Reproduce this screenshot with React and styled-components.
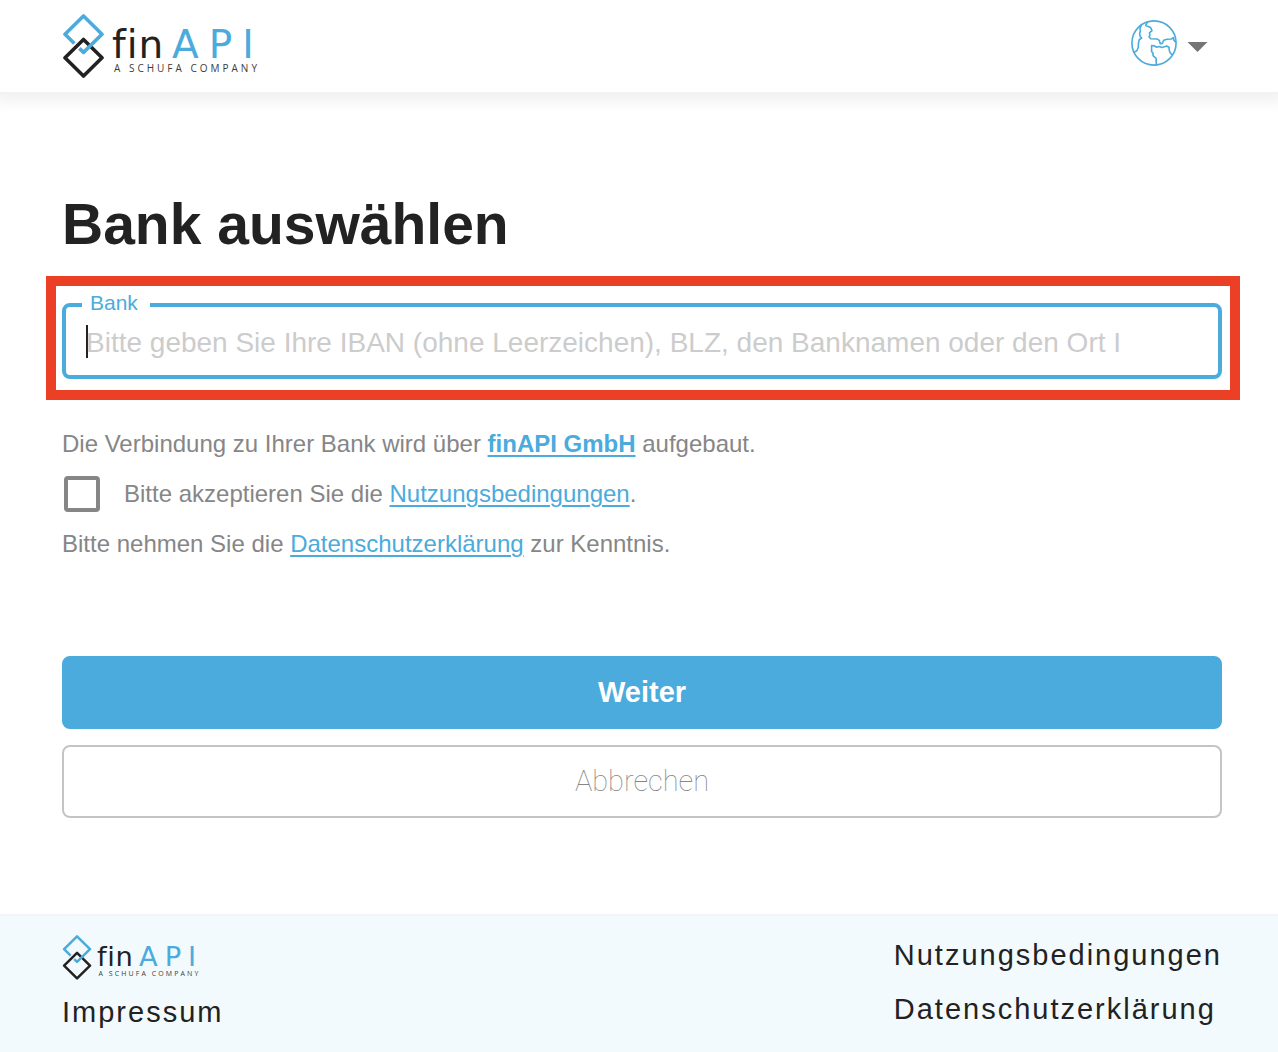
import React from "react";
import styled, { createGlobalStyle } from "styled-components";

const blue = "#4aabdc";
const ink = "#222222";
const grey = "#868686";

const GlobalStyle = createGlobalStyle`
  *, *::before, *::after { box-sizing: border-box; }
  body {
    margin: 0;
    background: #ffffff;
    color: ${ink};
    font-family: "Liberation Sans", Arial, sans-serif;
  }
  #root { min-height: 100vh; display: flex; flex-direction: column; overflow-x: hidden; }
`;

const Header = styled.header`
  display: flex;
  align-items: center;
  justify-content: space-between;
  padding: 14px 70px 14px 62px;
  border-bottom: 2px solid #f1f1f6;
  box-shadow: 0 2px 14px 6px rgba(0, 0, 0, 0.06);
`;

const LogoSvg = styled.svg`
  display: block;
  width: ${(p) => (p.$small ? "140px" : "200px")};
  height: auto;
`;

const Wordmark = styled.text`
  font-family: "DejaVu Sans", sans-serif;
  font-weight: 400;
  font-size: 39px;
  fill: ${(p) => p.$fill};
  letter-spacing: ${(p) => p.$track};
`;

const Tagline = styled.text`
  font-family: "Open Sans", sans-serif;
  font-size: 10px;
  letter-spacing: 3px;
  fill: #3c3c3c;
`;

const LanguageButton = styled.button`
  display: flex;
  align-items: center;
  gap: 10px;
  padding: 0 0 6px;
  border: 0;
  background: none;
  cursor: pointer;
`;

const Caret = styled.svg`
  display: block;
  margin-top: 8px;
`;

const Main = styled.main`
  flex: 1;
  padding: 90px 56px 96px 62px;
`;

const Title = styled.h1`
  margin: 0 0 12px;
  font-size: 57px;
  line-height: 80px;
  font-weight: 700;
`;

const Highlight = styled.div`
  margin: 0 -18px 0 -16px;
  padding: 7px 8px 11px 6px;
  border: 10px solid #ec4026;
`;

const Field = styled.fieldset`
  min-width: 0;
  margin: 0;
  padding: 0 16px 8px;
  border: 4px solid ${blue};
  border-radius: 8px;
`;

const Legend = styled.legend`
  padding: 0 12px 4px 8px;
  color: ${blue};
  font-size: 21px;
  line-height: 20px;
`;

const BankInput = styled.input`
  display: block;
  width: 100%;
  height: 50px;
  padding: 2px 4px 0;
  border: 0;
  outline: 0;
  background: none;
  color: ${ink};
  caret-color: ${ink};
  font: 28px/34px "Liberation Sans", Arial, sans-serif;
  &::placeholder { color: #cccccc; opacity: 1; }
  &:placeholder-shown:focus {
    caret-color: transparent;
    background: linear-gradient(${ink}, ${ink}) 4px 8px / 2px 33px no-repeat;
  }
`;

const Notes = styled.div`
  display: grid;
  gap: 16px;
  margin: 28px 0 96px;
  color: ${grey};
  font-size: 24px;
  line-height: 32px;
`;

const Note = styled.p`
  margin: 0;
`;

const TextLink = styled.a`
  color: ${blue};
  font-weight: ${(p) => (p.$strong ? 700 : 400)};
  text-decoration-thickness: 2px;
  text-underline-offset: 3px;
`;

const Consent = styled.div`
  display: flex;
  align-items: center;
  gap: 24px;
  padding-left: 2px;
`;

const Checkbox = styled.input`
  appearance: none;
  width: 36px;
  height: 36px;
  margin: 0;
  border: 4px solid ${grey};
  border-radius: 4px;
  &:checked { background: ${blue}; }
`;

const Actions = styled.div`
  display: grid;
  gap: 16px;
`;

const Action = styled.button`
  padding: 14px;
  border: 2px solid ${(p) => (p.$primary ? blue : "#c4c4c4")};
  border-radius: 8px;
  background: ${(p) => (p.$primary ? blue : "#ffffff")};
  color: ${(p) => (p.$primary ? "#ffffff" : grey)};
  font-family: ${(p) => (p.$primary ? '"Liberation Sans", Arial' : "Roboto")}, sans-serif;
  font-size: 29px;
  line-height: 41px;
  font-weight: ${(p) => (p.$primary ? 700 : 100)};
`;

const Footer = styled.footer`
  display: flex;
  justify-content: space-between;
  padding: 19px 56px 24px 62px;
  border-top: 2px solid #f1f4f9;
  background: #f2fafd;
`;

const FooterColumn = styled.div`
  display: grid;
  align-content: start;
  gap: ${(p) => p.$gap};
  padding-top: ${(p) => p.$top || 0};
`;

const FooterLink = styled.a`
  color: ${ink};
  font-size: 29px;
  line-height: 32px;
  letter-spacing: 2px;
  text-decoration: none;
`;

function Logo({ small }) {
  return (
    <LogoSvg $small={small} viewBox="0 0 200 64" role="img" aria-label="finAPI – a Schufa company">
      <g fill="none" strokeWidth="3.6" strokeLinejoin="round">
        <path d="M21.5 25.5 40 43.8 21.5 62 3 43.8Z" stroke={ink} />
        <path d="M12.4 29.6 3 20.2 21.5 2 40 20.2 21.5 38.4 17.4 34.4" stroke={blue} />
      </g>
      <Wordmark x="50" y="44" $fill={ink} $track="1px">fin</Wordmark>
      <Wordmark x="110" y="44" $fill={blue} $track="10px">API</Wordmark>
      <Tagline x="52" y="58">A SCHUFA COMPANY</Tagline>
    </LogoSvg>
  );
}

function Globe() {
  return (
    <svg width="46" height="46" viewBox="0 0 46 46" fill="none" stroke={blue} strokeWidth="1.6" strokeLinejoin="round" strokeLinecap="round" aria-hidden="true">
      <circle cx="23" cy="23" r="22.1" />
      <path d="M10.4 5 9 8.4 9.4 11 8.6 13.4 9.2 16.6 10.7 18 8.2 19.6 7.5 23 7.3 27.3 5.9 30.8 2.8 32.2" />
      <path d="M16.4 2.2 14.7 5.4 19.6 7.6 21 10.6 18.4 12.8 19 14.8 18 16.8 19.7 18.7 26.4 19 28.4 20.6 29.3 23.8 31.3 23.4 32.7 20.2 36 19.2 40.4 19 42.4 17.6 43 20.4 44.8 22.2" />
      <path d="M25.3 45 25.1 38.4 22 35.6 22.2 33.6 20.6 31.6 20.6 25.6 23 25.8 25.7 27.2 28 26.6 31 27.4 35.7 26 38 27.3 38.2 30 39 32.4 41.2 35" />
    </svg>
  );
}

export default function App() {
  return (
    <>
      <GlobalStyle />
      <Header>
        <Logo />
        <LanguageButton type="button" aria-label="Sprache wählen">
          <Globe />
          <Caret width="21" height="10" viewBox="0 0 21 10" aria-hidden="true">
            <path d="M.5 0h20l-10 10Z" fill="#757575" />
          </Caret>
        </LanguageButton>
      </Header>
      <Main>
        <Title>Bank auswählen</Title>
        <Highlight>
          <Field>
            <Legend><label htmlFor="bank">Bank</label></Legend>
            <BankInput
              id="bank"
              type="text"
              autoFocus
              autoComplete="off"
              placeholder="Bitte geben Sie Ihre IBAN (ohne Leerzeichen), BLZ, den Banknamen oder den Ort I"
            />
          </Field>
        </Highlight>
        <Notes>
          <Note>
            Die Verbindung zu Ihrer Bank wird über <TextLink href="#finapi" $strong>finAPI GmbH</TextLink> aufgebaut.
          </Note>
          <Consent>
            <Checkbox id="terms" type="checkbox" />
            <label htmlFor="terms">
              Bitte akzeptieren Sie die <TextLink href="#nutzungsbedingungen">Nutzungsbedingungen</TextLink>.
            </label>
          </Consent>
          <Note>
            Bitte nehmen Sie die <TextLink href="#datenschutz">Datenschutzerklärung</TextLink> zur Kenntnis.
          </Note>
        </Notes>
        <Actions>
          <Action type="button" $primary>Weiter</Action>
          <Action type="button">Abbrechen</Action>
        </Actions>
      </Main>
      <Footer>
        <FooterColumn $gap="16px">
          <Logo small />
          <FooterLink href="#impressum">Impressum</FooterLink>
        </FooterColumn>
        <FooterColumn $gap="22px" $top="4px">
          <FooterLink href="#nutzungsbedingungen">Nutzungsbedingungen</FooterLink>
          <FooterLink href="#datenschutz">Datenschutzerklärung</FooterLink>
        </FooterColumn>
      </Footer>
    </>
  );
}
